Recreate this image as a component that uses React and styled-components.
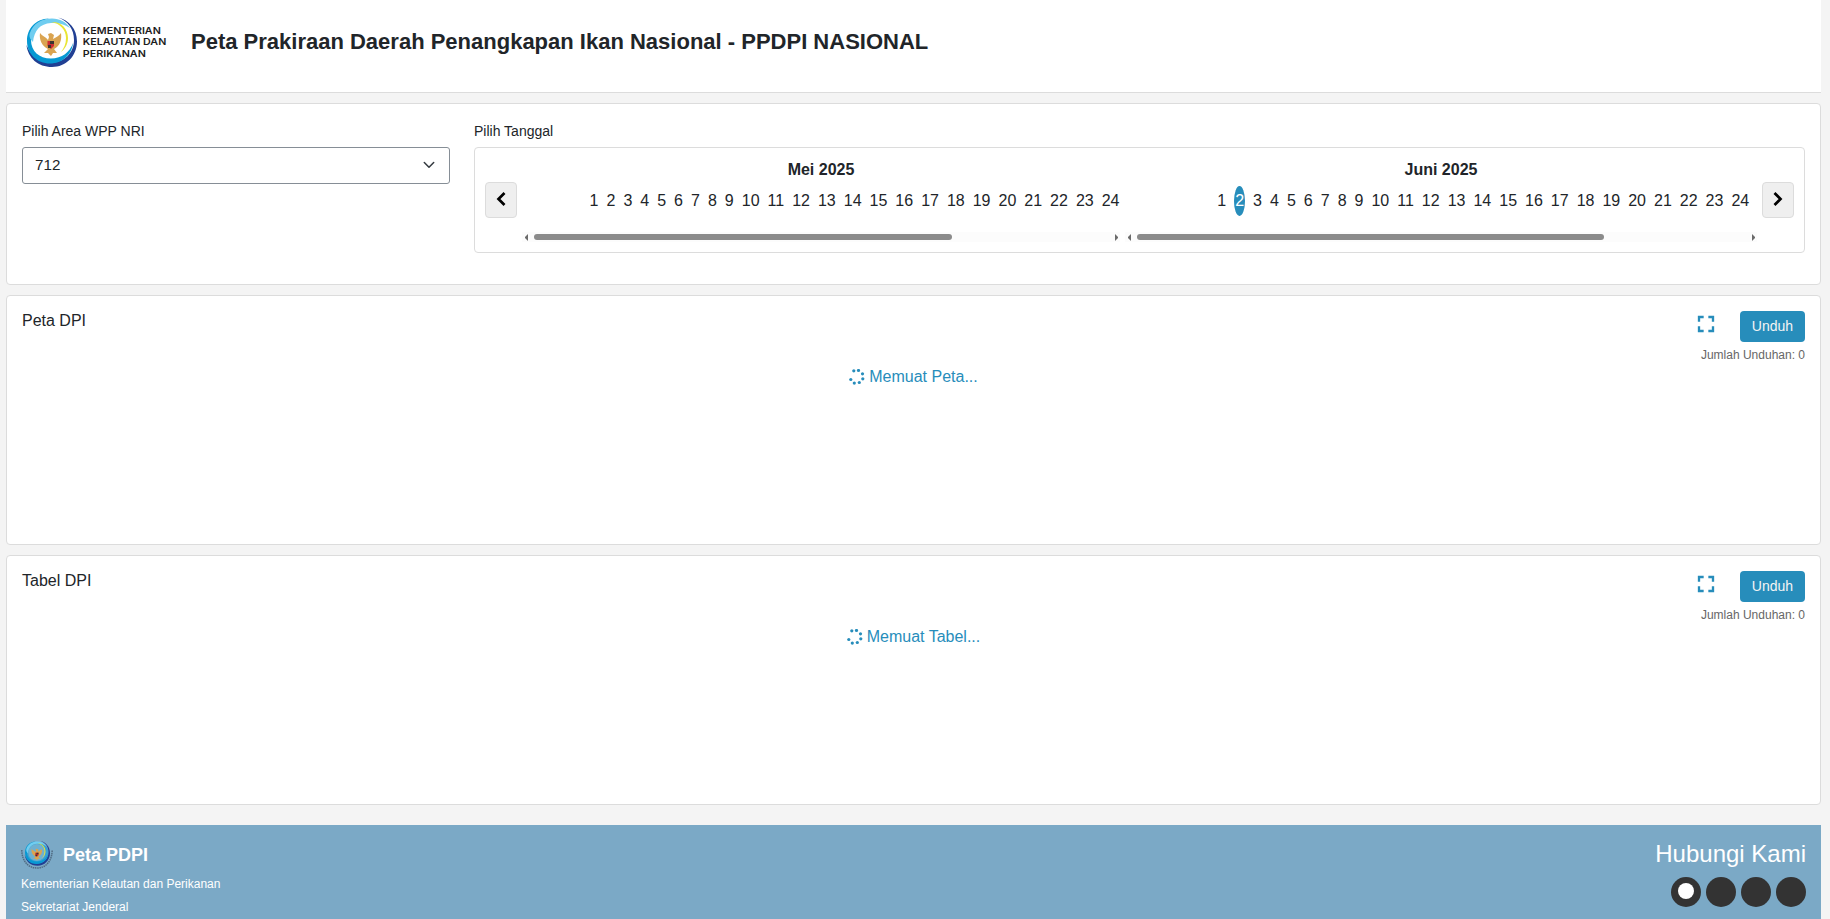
import React from "react";
import styled, { createGlobalStyle, css } from "styled-components";
import { MdFullscreen } from "react-icons/md";

const Global = createGlobalStyle`
  *, *::before, *::after { box-sizing: border-box; }
  html, body { margin: 0; height: 100%; overflow: hidden; }
  body { background: #f4f4f4; color: #212529; font-family: "Liberation Sans", Arial, sans-serif; font-size: 16px; line-height: 1.5; }
`;

const Page = styled.div`
  height: 919px;
  overflow: hidden;
  padding: 0 9px 0 6px;
`;

const Header = styled.header`
  display: flex;
  align-items: flex-start;
  height: 93px;
  padding: 12px 20px 0;
  background: #fff;
  border-bottom: 1px solid #dcdcdc;
`;

const BrandLogo = styled.svg`
  flex: none;
  width: 145px;
  height: 60px;
`;

const PageTitle = styled.h1`
  margin: 13px 0 0 20px;
  font-size: 22px;
  line-height: 33px;
  font-weight: 700;
  white-space: nowrap;
`;

const Card = styled.section`
  height: ${(p) => p.$height}px;
  margin-top: 10px;
  padding: 15px;
  background: #fff;
  border: 1px solid #dcdcdc;
  border-radius: 4px;
`;

const Filters = styled(Card)`
  display: grid;
  grid-template-columns: 428px 1fr;
  column-gap: 24px;
`;

const Label = styled.div`
  font-size: 14px;
  line-height: 21px;
  padding-top: 2px;
  margin-bottom: 5px;
`;

const Select = styled.button`
  display: flex;
  align-items: center;
  justify-content: space-between;
  width: 100%;
  height: 37px;
  padding: 0 14px 2px 12px;
  background: #fff;
  border: 1px solid #868e96;
  border-radius: 3px;
  color: #212529;
  font: 15.2px "Liberation Sans", Arial, sans-serif;
`;

const Calendar = styled.div`
  display: flex;
  align-items: center;
  height: 106px;
  padding: 0 10px;
  border: 1px solid #dcdcdc;
  border-radius: 4px;
`;

const NavButton = styled.button`
  display: flex;
  align-items: center;
  justify-content: center;
  flex: none;
  width: 32px;
  height: 36px;
  padding: 0 0 2px;
  background: #efefef;
  border: 1px solid #dcdcdc;
  border-radius: 4px;
`;

const Months = styled.div`
  flex: 1;
  display: grid;
  grid-template-columns: 598px 632px;
  column-gap: 5px;
  padding-left: 5px;
`;

const Month = styled.div`
  display: flex;
  flex-direction: column;
  height: 84px;
`;

const MonthName = styled.div`
  text-align: center;
  font-weight: 700;
  line-height: 24px;
`;

const Days = styled.div`
  display: flex;
  justify-content: flex-end;
  gap: 8px;
  margin-top: 4px;
  padding-right: ${(p) => p.$inset}px;
`;

const Day = styled.span`
  height: 30px;
  line-height: 29px;
  ${(p) => p.$selected && css`
    padding: 0 1px;
    background: #278dbb;
    border-radius: 50%;
    color: #fff;
  `}
`;

const Scroll = styled.div`
  display: flex;
  align-items: center;
  justify-content: space-between;
  height: 10px;
  margin-top: auto;
  padding: 0 2px 0 3px;
  background: #fcfcfc;
`;

const Thumb = styled.div`
  width: ${(p) => p.$width}px;
  height: 6px;
  margin: 0 auto 0 6px;
  background: #8b8b8b;
  border-radius: 3px;
`;

const ScrollArrow = styled.svg`
  width: 3px;
  height: 7px;
  fill: #6b6b6b;
  ${(p) => p.$flip && css`transform: scaleX(-1);`}
`;

const PanelHead = styled.div`
  display: flex;
  justify-content: space-between;
  align-items: flex-start;
  height: 54px;
`;

const PanelTitle = styled.div`
  line-height: 19px;
`;

const Tools = styled.div`
  display: flex;
  flex-direction: column;
  align-items: flex-end;
`;

const ToolRow = styled.div`
  display: flex;
  align-items: flex-start;
  gap: 20px;
  color: #278dbb;
`;

const FullscreenIcon = styled(MdFullscreen)`
  margin-top: -0.6px;
`;

const DownloadButton = styled.button`
  width: 65px;
  height: 31px;
  padding: 0 0 1px;
  border: 0;
  border-radius: 4px;
  background: #278dbb;
  color: #f4f4f4;
  font: 14px "Liberation Sans", Arial, sans-serif;
`;

const Count = styled.div`
  margin-top: 4px;
  font-size: 12px;
  line-height: 18px;
  color: #666;
`;

const Loading = styled.div`
  display: flex;
  justify-content: center;
  align-items: center;
  gap: 4px;
  color: #278dbb;
  line-height: 24px;
`;

const Footer = styled.footer`
  display: flex;
  justify-content: space-between;
  height: 130px;
  margin-top: 20px;
  padding: 15px;
  background: #7ba9c6;
  color: #fff;
`;

const FooterBrand = styled.div`
  display: flex;
  align-items: center;
  gap: 10px;
  height: 30px;
  font-size: 18px;
  font-weight: 700;
`;

const FooterLine = styled.div`
  margin-top: 5px;
  font-size: 12px;
  line-height: 18px;
`;

const Contact = styled.div`
  text-align: right;
  font-size: 24px;
  line-height: 27px;
`;

const Socials = styled.div`
  display: flex;
  justify-content: flex-end;
  gap: 5px;
  margin-top: 10px;
`;

const Social = styled.span`
  display: flex;
  align-items: center;
  justify-content: center;
  width: 30px;
  height: 30px;
  padding-bottom: 2px;
  border-radius: 50%;
  background: #333;
`;

const SocialDot = styled.span`
  width: 16px;
  height: 16px;
  border-radius: 50%;
  background: #fff;
`;

function Emblem() {
  return (
    <g>
      <path d="M32 0.5C43 3 51 12 51 24.5C51 39 40 50 26 50C12 50 2 41 0.5 28C5 39 14 45.5 25.500 45.500C38 45.500 48 36 48 23C48 12 42 4 32 .5Z" fill="#213f93" />
      <path d="M23 1.500C9 2 1 12 1 24C1 37 11 46.500 24 46.500C36 46.500 46 38 47 26C44 35 36 41.500 25 41.500C13 41.500 5 34 5 23C5 12 13 4 23 1.500Z" fill="#0799d3" />
      <path d="M3.500 17C7 6 16 1.500 26 1.500C34 1.500 40 5 44 11C38 7 32 5.500 25 6C14 6.500 8 14 7 25C4.500 23 3 20 3.500 17Z" fill="#70cdf0" />
      <path d="M25 5C35 4 42 12 42 21C42 27 39 32 35 35C38 31 40 27 40 21C40 13 34 6 25 5Z" fill="#e9e535" />
      <path d="M14 16C16 19 20 20 22 23L23 20L22 17L25 16L28 18L27 22C30 20 33 19 35 16C36 23 34 29 28 32L31 36L27 36L25 39L22 36L18 36L22 32C16 29 13 23 14 16Z" fill="#daa451" />
      <path d="M21.500 24h6.500v5l-3 3-3.500-3Z" fill="#ce2b32" />
      <path d="M24 24h4v3h-4zM22 28h3v3h-3z" fill="#3c352f" />
    </g>
  );
}

function HeaderLogo() {
  return (
    <BrandLogo viewBox="0 0 145 60">
      <g transform="translate(0 5)"><Emblem /></g>
      <g fill="#1d1d1d" fontFamily="Inter, sans-serif" fontWeight="600" fontSize="9.400">
        <text x="56.800" y="21.800" textLength="78" lengthAdjust="spacingAndGlyphs">KEMENTERIAN</text>
        <text x="56.800" y="33.300" textLength="83.500" lengthAdjust="spacingAndGlyphs">KELAUTAN DAN</text>
        <text x="56.800" y="44.800" textLength="63" lengthAdjust="spacingAndGlyphs">PERIKANAN</text>
      </g>
    </BrandLogo>
  );
}

function Spinner() {
  const dots = [[4.500, 2], [9.200, 1.700], [13.200, 5], [13.500, 10], [10, 13.700], [5, 14.300], [1.500, 10.700]];
  return (
    <svg width="16" height="16" viewBox="0 0 16 16" fill="#278dbb">
      {dots.map(([x, y]) => <circle key={x} cx={x + 0.3} cy={y - 0.2} r="1.600" />)}
    </svg>
  );
}

function Chevron({ right }) {
  return (
    <svg width="10" height="14" viewBox="0 0 10 14" fill="none" stroke="#000" strokeWidth="2.700">
      <path d={right ? "M1.500 1L7.500 7L1.500 13" : "M8.500 1L2.500 7L8.500 13"} />
    </svg>
  );
}

function MonthColumn({ name, selected, thumb, inset }) {
  return (
    <Month>
      <MonthName>{name}</MonthName>
      <Days $inset={inset}>
        {Array.from({ length: 24 }, (_, i) => (
          <Day key={i} $selected={selected === i + 1}>{i + 1}</Day>
        ))}
      </Days>
      <Scroll>
        <ScrollArrow viewBox="0 0 3 7"><path d="M3 0v7L0 4V3z" /></ScrollArrow>
        <Thumb $width={thumb} />
        <ScrollArrow $flip viewBox="0 0 3 7"><path d="M3 0v7L0 4V3z" /></ScrollArrow>
      </Scroll>
    </Month>
  );
}

function Panel({ title, loading }) {
  return (
    <Card $height={250}>
      <PanelHead>
        <PanelTitle>{title}</PanelTitle>
        <Tools>
          <ToolRow>
            <FullscreenIcon size={28} />
            <DownloadButton>Unduh</DownloadButton>
          </ToolRow>
          <Count>Jumlah Unduhan: 0</Count>
        </Tools>
      </PanelHead>
      <Loading><Spinner />{loading}</Loading>
    </Card>
  );
}

export default function App() {
  return (
    <Page>
      <Global />
      <Header>
        <HeaderLogo />
        <PageTitle>Peta Prakiraan Daerah Penangkapan Ikan Nasional - PPDPI NASIONAL</PageTitle>
      </Header>
      <Filters $height={182}>
        <div>
          <Label>Pilih Area WPP NRI</Label>
          <Select>
            712
            <svg width="12" height="8" viewBox="0 0 12 8" fill="none" stroke="#343a40" strokeWidth="1.500" strokeLinecap="round" strokeLinejoin="round">
              <path d="M1.300 1.500L6 6.300L10.700 1.500" />
            </svg>
          </Select>
        </div>
        <div>
          <Label>Pilih Tanggal</Label>
          <Calendar>
            <NavButton><Chevron /></NavButton>
            <Months>
              <MonthColumn name="Mei 2025" thumb={418} inset={0.5} />
              <MonthColumn name="Juni 2025" thumb={467} inset={7.8} selected={2} />
            </Months>
            <NavButton><Chevron right /></NavButton>
          </Calendar>
        </div>
      </Filters>
      <Panel title="Peta DPI" loading="Memuat Peta..." />
      <Panel title="Tabel DPI" loading="Memuat Tabel..." />
      <Footer>
        <div>
          <FooterBrand>
            <svg width="32" height="30" viewBox="0 0 32 30">
              <path d="M.8 10C1 21 7 28 16 28S31 21 31.200 10" fill="none" stroke="#506b82" strokeWidth="1.500" strokeDasharray="1.500 .7" />
              <circle cx="16.300" cy="13.500" r="11.500" fill="#3aa0d4" />
              <circle cx="15.800" cy="12.500" r="8.500" fill="#6fb0d0" />
              <g transform="translate(3.500 .8) scale(.5)"><Emblem /></g>
            </svg>
            Peta PDPI
          </FooterBrand>
          <FooterLine>Kementerian Kelautan dan Perikanan</FooterLine>
          <FooterLine>Sekretariat Jenderal</FooterLine>
        </div>
        <Contact>
          Hubungi Kami
          <Socials>
            <Social><SocialDot /></Social>
            <Social />
            <Social />
            <Social />
          </Socials>
        </Contact>
      </Footer>
    </Page>
  );
}
